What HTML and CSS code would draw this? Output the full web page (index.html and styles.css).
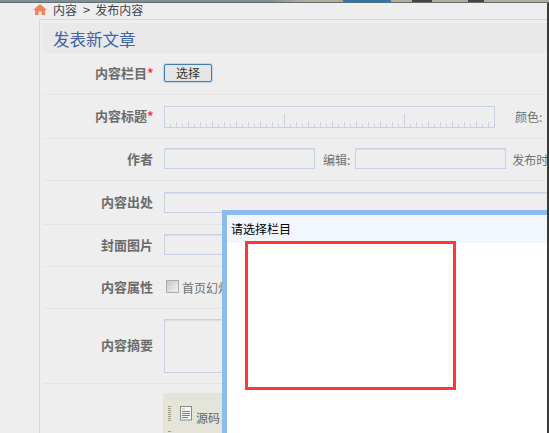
FILE: index.html
```html
<!DOCTYPE html>
<html lang="zh-CN">
<head>
    <meta charset="UTF-8">
    <title>发布内容</title>
    <link rel="stylesheet" href="styles.css">
</head>
<body>

    <!-- window behind, only a sliver shows -->
    <div class="top-strip">
        <span class="strip-blue"></span>
        <span class="strip-dark"></span>
        <span class="strip-dark strip-dark-2"></span>
    </div>

    <div class="page">
        <div class="main">
            <div class="crumbs">
                <svg class="home-icon" width="14" height="11" viewBox="0 0 14 11">
                    <path d="M7 0 L14 6 L12 6 L12 11 L8.5 11 L8.5 7.5 L5.5 7.5 L5.5 11 L2 11 L2 6 L0 6 Z" fill="#f0855a"/>
                </svg>
                <span>内容</span>
                <span class="crumb-sep">&gt;</span>
                <span>发布内容</span>
            </div>

            <div class="panel">
                <h1 class="panel-title">发表新文章</h1>

                <!-- form rows -->
                <div class="row row-pick">
                    <label class="row-label">内容栏目<i>*</i></label>
                    <button class="pick-btn">选择</button>
                </div>
                <div class="row row-title">
                    <label class="row-label">内容标题<i>*</i></label>
                    <div class="input input-ruler"></div>
                    <span class="side-label color-label">颜色:</span>
                </div>
                <div class="row row-author">
                    <label class="row-label">作者</label>
                    <div class="input input-short"></div>
                    <span class="side-label edit-label">编辑:</span>
                    <div class="input input-short"></div>
                    <span class="side-label">发布时</span>
                </div>
                <div class="row row-source">
                    <label class="row-label">内容出处</label>
                    <div class="input input-long"></div>
                </div>
                <div class="row row-cover">
                    <label class="row-label">封面图片</label>
                    <div class="input input-long"></div>
                </div>
                <div class="row row-attr">
                    <label class="row-label">内容属性</label>
                    <span class="check"></span>
                    <span class="side-label">首页幻灯</span>
                </div>
                <div class="row row-summary">
                    <label class="row-label">内容摘要</label>
                    <div class="input input-area"></div>
                </div>

                <!-- editor toolbar -->
                <div class="editor-bar">
                    <div class="tool-row">
                        <span class="grip"></span>
                        <svg class="source-icon" width="12" height="15" viewBox="0 0 12 15">
                            <rect x="0.5" y="0.5" width="11" height="13.5" fill="#f4f6f4" stroke="#7d8f8c"/>
                            <path d="M2 3 H5" stroke="#f0a860"/>
                            <path d="M2 5.5 H10 M2 7.5 H10 M2 9.5 H10 M2 11.5 H8" stroke="#6d8583"/>
                        </svg>
                        <span class="tool-text">源码</span>
                    </div>
                    <div class="tool-row">
                        <span class="grip"></span>
                    </div>
                </div>
            </div>
        </div>
        <div class="edge"></div>
    </div>

    <!-- select dialog -->
    <div class="dialog">
        <div class="dialog-head">请选择栏目</div>
        <div class="tree-box"></div>
    </div>

</body>
</html>
```

FILE: styles.css
```css
html, body {
    margin: 0;
    height: 433px;
    overflow: hidden;
}
body {
    font-family: "Noto Sans CJK SC", "Liberation Sans", sans-serif;
    font-size: 12px;
    color: #666;
    background: #eeeeee;
    position: relative;
}
.top-strip {
    height: 3px;
    background: linear-gradient(90deg, #7f9094 0, #7f9094 270px, #b5a99a 300px);
    border-bottom: 1px solid #5f6f72;
    box-sizing: border-box;
    display: flex;
    padding-left: 343px;
}
.strip-blue {
    width: 48px;
    background: #2a78b8;
}
.strip-dark {
    width: 20px;
    margin-left: 21px;
    background: #4a4438;
}
.strip-dark-2 {
    width: 16px;
    margin-left: 36px;
}
.page {
    display: flex;
    height: 430px;
}
.main {
    width: 547px;
    flex-shrink: 0;
}
.edge {
    flex: 1;
    background: #3a3a34;
}

/* breadcrumb */
.crumbs {
    height: 16px;
    padding-left: 33px;
    display: flex;
    align-items: center;
    gap: 6px;
    color: #444;
    line-height: 13px;
}
.crumbs span {
    margin-bottom: 3px;
}
.home-icon {
    margin-bottom: 3px;
}
.crumb-sep {
    font-size: 13px;
    margin-right: -1px;
}

/* panel */
.panel {
    margin-left: 39px;
    border-left: 1px solid #d8d8d8;
    border-top: 1px solid #d8d8d8;
    padding: 3px 0 0 3px;
    height: 410px;
}
.panel-title {
    margin: 0;
    height: 30px;
    line-height: 32px;
    padding-left: 10px;
    background: #e9e9e9;
    color: #3f62a8;
    font-size: 16.5px;
    font-weight: normal;
}
.row {
    display: flex;
    align-items: center;
    border-bottom: 1px solid #e4e4e4;
    box-sizing: border-box;
}
.row-pick { height: 42px; }
.row-title { height: 44px; }
.row-author { height: 42px; }
.row-source { height: 44px; }
.row-cover { height: 42px; }
.row-attr { height: 42px; }
.row-summary { height: 75px; }
.row-label {
    width: 110px;
    flex-shrink: 0;
    margin-right: 11px;
    margin-bottom: 2px;
    text-align: right;
    font-weight: bold;
    font-size: 13px;
    color: #6b6b6b;
    white-space: nowrap;
}
.row-summary .row-label {
    margin-bottom: 4px;
}
.row-label i {
    color: #f04040;
    font-style: normal;
    display: inline-block;
    width: 6px;
}
.pick-btn {
    width: 48px;
    height: 18px;
    margin-bottom: 2px;
    padding: 0;
    border: 1px solid #3f7fb0;
    border-radius: 2px;
    box-shadow: 0 0 1px 1px #bcd6ec;
    background: #e6e6e6;
    color: #333;
    font: 12px "Noto Sans CJK SC", sans-serif;
    line-height: 16px;
}
.input {
    box-sizing: border-box;
    height: 21px;
    border: 1px solid #c8d0e8;
    box-shadow: inset 0 1px 1px rgba(0, 0, 0, 0.07);
    background: #eeeeee;
    flex-shrink: 0;
}
.row-author .input {
    margin-bottom: 2px;
}
.row-cover .input {
    margin-bottom: 3px;
}
.input-ruler {
    width: 331px;
    height: 22px;
    box-shadow: none;
    background-color: #eeeeee;
    background-image:
        repeating-linear-gradient(90deg, transparent 0 119px, #c8d0e8 119px 120px),
        repeating-linear-gradient(90deg, transparent 0 11px, #c8d0e8 11px 12px),
        repeating-linear-gradient(90deg, transparent 0 5px, #c8d0e8 5px 6px);
    background-size: 100% 13px, 100% 5px, 100% 3px;
    background-position: 0 bottom, 0 bottom, 0 bottom;
    background-repeat: no-repeat;
}
.input-short {
    width: 151px;
}
.input-long {
    width: 383px;
    border-right: 0;
}
.input-area {
    width: 383px;
    height: 54px;
    border-right: 0;
}
.side-label {
    color: #707070;
    margin-left: 6px;
    margin-right: 8px;
    margin-bottom: 1px;
    white-space: nowrap;
}
.color-label {
    margin-left: 20px;
}
.edit-label {
    margin-left: 8px;
    margin-right: 5px;
}
.check {
    box-sizing: border-box;
    width: 13px;
    height: 13px;
    margin: 0 0 3px 2px;
    border: 1px solid #aaa;
    background: linear-gradient(135deg, #c8c8c8, #f2f2f2);
    flex-shrink: 0;
}
.row-attr .side-label {
    margin-left: 3px;
}

/* toolbar */
.editor-bar {
    margin: 9px 0 0 120px;
    height: 50px;
    padding: 13px 0 0 5px;
    box-sizing: border-box;
    background: #e4e4d8;
    color: #666;
}
.tool-row {
    display: flex;
    align-items: center;
    height: 15px;
    margin-bottom: 10px;
}
.grip {
    width: 3px;
    height: 15px;
    margin-right: 9px;
    background: repeating-linear-gradient(180deg, #a09a80 0 1px, transparent 1px 2px);
}
.source-icon {
    margin-right: 4px;
}
.tool-text {
    margin-top: 8px;
}

/* dialog */
.dialog {
    position: absolute;
    left: 222px;
    top: 210px;
    width: 325px;
    height: 223px;
    box-sizing: border-box;
    border: solid #8cbcec;
    border-width: 5px 0 0 5px;
    background: #fff;
}
.dialog-head {
    height: 28px;
    line-height: 28px;
    padding-left: 4px;
    background: #f2f6ff;
    color: #000;
    font-size: 12px;
}
.tree-box {
    position: absolute;
    left: 18px;
    top: 26px;
    width: 211px;
    height: 149px;
    box-sizing: border-box;
    border: 3px solid #ff3636;
}
```
